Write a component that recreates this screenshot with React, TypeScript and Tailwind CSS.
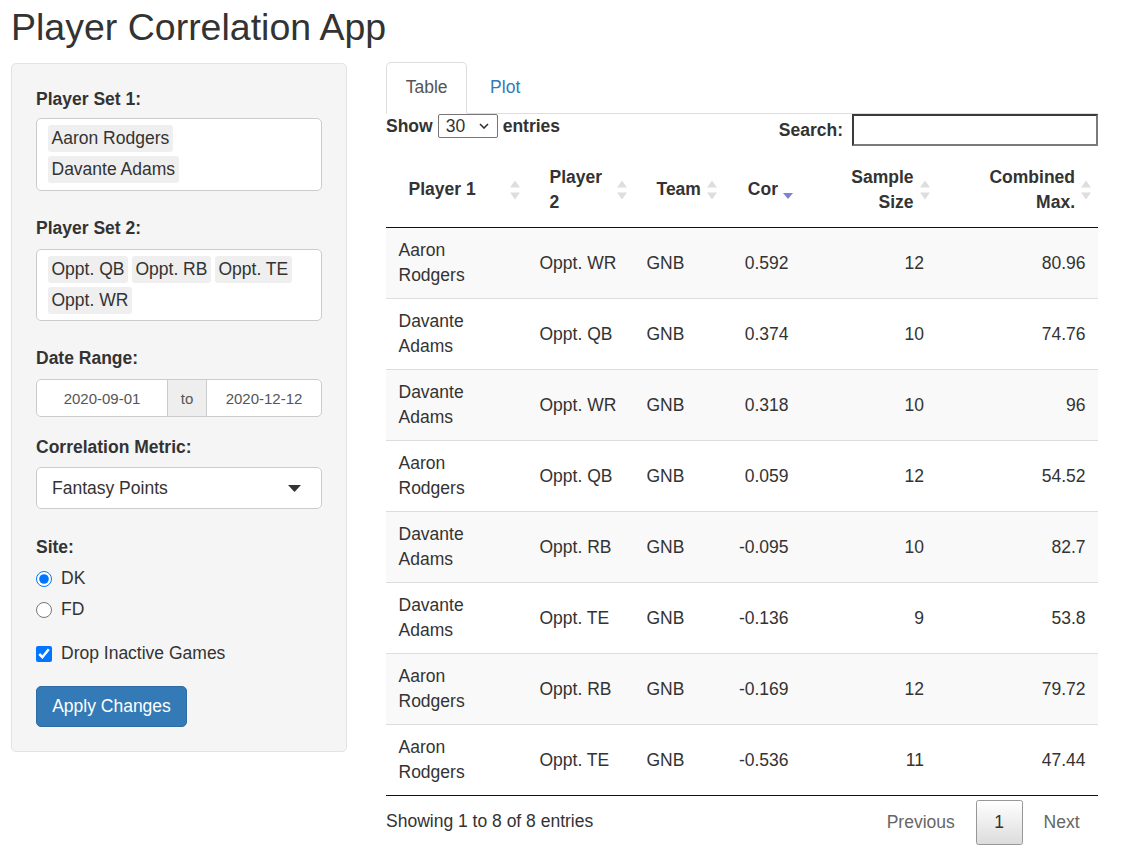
import React from "react";

const rows: string[][] = [
  ["Aaron Rodgers", "Oppt. WR", "GNB", "0.592", "12", "80.96"],
  ["Davante Adams", "Oppt. QB", "GNB", "0.374", "10", "74.76"],
  ["Davante Adams", "Oppt. WR", "GNB", "0.318", "10", "96"],
  ["Aaron Rodgers", "Oppt. QB", "GNB", "0.059", "12", "54.52"],
  ["Davante Adams", "Oppt. RB", "GNB", "-0.095", "10", "82.7"],
  ["Davante Adams", "Oppt. TE", "GNB", "-0.136", "9", "53.8"],
  ["Aaron Rodgers", "Oppt. RB", "GNB", "-0.169", "12", "79.72"],
  ["Aaron Rodgers", "Oppt. TE", "GNB", "-0.536", "11", "47.44"],
];

const SortBoth = () => (
  <svg
    width="10"
    height="19"
    viewBox="0 0 10 19"
    className="absolute right-[7px] top-1/2 -translate-y-1/2"
  >
    <path d="M5 0 L10 7 L0 7 Z" fill="#dedede" />
    <path d="M0 12 L10 12 L5 19 Z" fill="#dedede" />
  </svg>
);

const SortDesc = () => (
  <svg
    width="10"
    height="19"
    viewBox="0 0 10 19"
    className="absolute right-[8px] top-1/2 -translate-y-1/2"
  >
    <path d="M0 12.5 L10 12.5 L5 18.5 Z" fill="#7e82d6" />
  </svg>
);

const Chip = ({ children }: { children: React.ReactNode }) => (
  <span className="h-[27px] flex items-center px-[3.5px] bg-[#efefef] rounded-[3px] text-[#333] whitespace-nowrap">
    {children}
  </span>
);

export default function App() {
  return (
    <div className="w-[1137px] h-[858px] overflow-hidden bg-white text-[#333] text-[17.5px] leading-[25px] font-['Liberation_Sans',Arial,sans-serif] px-[11px]">
      <h2 className="text-[37.5px] leading-[41px] font-normal pt-[7px] mb-[15px]">
        Player Correlation App
      </h2>

      <div className="flex items-start">
        {/* Sidebar */}
        <div className="w-[336px] shrink-0 bg-[#f5f5f5] border border-[#e3e3e3] rounded-[5px] px-[24px] pt-[23px] pb-[24px]">
          <div className="font-bold mb-[6px]">Player Set 1:</div>
          <div className="h-[73px] bg-white border border-[#ccc] rounded-[5px] pl-[11px] pt-[6px] flex flex-col items-start gap-[4px]">
            <Chip>Aaron Rodgers</Chip>
            <Chip>Davante Adams</Chip>
          </div>

          <div className="font-bold mt-[25px] mb-[8px]">Player Set 2:</div>
          <div className="h-[72px] bg-white border border-[#ccc] rounded-[5px] pl-[11px] pr-[8px] pt-[6px] flex flex-wrap content-start gap-[4px]">
            <Chip>Oppt. QB</Chip>
            <Chip>Oppt. RB</Chip>
            <Chip>Oppt. TE</Chip>
            <Chip>Oppt. WR</Chip>
          </div>

          <div className="font-bold mt-[25px] mb-[8px]">Date Range:</div>
          <div className="h-[38px] flex border border-[#ccc] rounded-[5px] bg-white text-[15px] text-[#555] overflow-hidden">
            <div className="w-[130px] flex items-center justify-center">2020-09-01</div>
            <div className="w-[40px] flex items-center justify-center bg-[#eee] border-x border-[#ccc]">to</div>
            <div className="flex-1 flex items-center justify-center">2020-12-12</div>
          </div>

          <div className="font-bold mt-[18px] mb-[7px]">Correlation Metric:</div>
          <div className="h-[42px] flex items-center justify-between bg-white border border-[#ccc] rounded-[5px] pl-[15px] pr-[20px]">
            <span>Fantasy Points</span>
            <svg width="13" height="7" viewBox="0 0 13 7">
              <path d="M0 0 L13 0 L6.5 7 Z" fill="#333" />
            </svg>
          </div>

          <div className="font-bold mt-[26px]">Site:</div>
          <label className="flex items-center mt-[6px]">
            <input type="radio" name="site" defaultChecked className="w-4 h-4 m-0 accent-[#0075ff]" />
            <span className="ml-[9px]">DK</span>
          </label>
          <label className="flex items-center mt-[6px]">
            <input type="radio" name="site" className="w-4 h-4 m-0" />
            <span className="ml-[9px]">FD</span>
          </label>
          <label className="flex items-center mt-[19px]">
            <input type="checkbox" defaultChecked className="w-4 h-4 m-0 accent-[#0075ff]" />
            <span className="ml-[9px]">Drop Inactive Games</span>
          </label>

          <button className="mt-[20px] h-[41px] w-[151px] bg-[#337ab7] border border-[#2e6da4] rounded-[5px] text-white text-[17.5px] leading-[25px]">
            Apply Changes
          </button>
        </div>

        {/* Main */}
        <div className="ml-[39px] w-[712px] -mt-[1px]">
          <div className="flex border-b border-[#ddd] h-[52px]">
            <div className="h-[52px] -mb-[1px] px-[18.75px] pt-[12px] border border-[#ddd] border-b-transparent rounded-t-[5px] bg-white text-[#555]">
              Table
            </div>
            <div className="ml-[4px] px-[18.75px] pt-[13px] text-[#337ab7]">Plot</div>
          </div>

          <div className="flex justify-between items-start">
            <div className="flex items-center h-[24px] font-bold">
              <span>Show</span>
              <div className="ml-[5px] mr-[5px] w-[60px] h-[24px] border border-[#767676] rounded-[2px] flex items-center justify-between pl-[7px] pr-[8px] font-normal">
                <span>30</span>
                <svg width="10" height="6" viewBox="0 0 10 6">
                  <path d="M1 1 L5 5 L9 1" stroke="#333" strokeWidth="1.6" fill="none" />
                </svg>
              </div>
              <span>entries</span>
            </div>
            <div className="flex items-center h-[32px] font-bold">
              <span>Search:</span>
              <div className="ml-[9px] w-[246px] h-[32px] border-2 border-[#3a3a3a] border-r-[#7a7a7a] border-b-[#7a7a7a] bg-white" />
            </div>
          </div>

          <table className="mt-[6px] w-[712px] table-fixed border-separate border-spacing-0">
            <colgroup>
              <col className="w-[141px]" />
              <col className="w-[107px]" />
              <col className="w-[90px]" />
              <col className="w-[77px]" />
              <col className="w-[135.5px]" />
              <col className="w-[161.5px]" />
            </colgroup>
            <thead>
              <tr className="font-bold">
                <th className="relative text-left pl-[22.5px] pr-[23px] py-[12.5px] border-b border-b-[#111]">
                  Player 1
                  <SortBoth />
                </th>
                <th className="relative text-left pl-[22.5px] pr-[23px] py-[12.5px] border-b border-b-[#111]">
                  Player 2
                  <SortBoth />
                </th>
                <th className="relative text-left pl-[22.5px] pr-[18px] py-[12.5px] border-b border-b-[#111]">
                  Team
                  <SortBoth />
                </th>
                <th className="relative text-right pl-[10px] pr-[23px] py-[12.5px] border-b border-b-[#111]">
                  Cor
                  <SortDesc />
                </th>
                <th className="relative text-right pl-[22.5px] pr-[23px] py-[12.5px] border-b border-b-[#111]">
                  Sample Size
                  <SortBoth />
                </th>
                <th className="relative text-right pl-[22.5px] pr-[23px] py-[12.5px] border-b border-b-[#111]">
                  Combined Max.
                  <SortBoth />
                </th>
              </tr>
            </thead>
            <tbody>
              {rows.map((r, i) => {
                const bg = i % 2 === 0 ? "bg-[#f9f9f9]" : "bg-white";
                const bt = i === 0 ? "" : "border-t border-t-[#ddd]";
                const bb = i === rows.length - 1 ? "border-b border-b-[#111]" : "";
                const base = `px-[12.5px] py-[10px] align-middle ${bt} ${bb}`;
                return (
                  <tr key={i} className={bg}>
                    <td className={`${base} text-left`}>{r[0]}</td>
                    <td className={`${base} text-left`}>{r[1]}</td>
                    <td className={`${base} text-left`}>{r[2]}</td>
                    <td className={`${base} text-right`}>{r[3]}</td>
                    <td className={`${base} text-right`}>{r[4]}</td>
                    <td className={`${base} text-right`}>{r[5]}</td>
                  </tr>
                );
              })}
            </tbody>
          </table>

          <div className="flex justify-between items-start">
            <div className="pt-[13px]">Showing 1 to 8 of 8 entries</div>
            <div className="pt-[4px] flex items-center">
              <span className="px-[17.5px] py-[8.75px] border border-transparent text-[#666]">Previous</span>
              <span className="ml-[2.5px] px-[17.5px] py-[8.75px] border border-[#979797] rounded-[2.5px] bg-gradient-to-b from-white to-[#dcdcdc] text-[#333]">
                1
              </span>
              <span className="ml-[2.5px] px-[17.5px] py-[8.75px] border border-transparent text-[#666]">Next</span>
            </div>
          </div>
        </div>
      </div>
    </div>
  );
}
